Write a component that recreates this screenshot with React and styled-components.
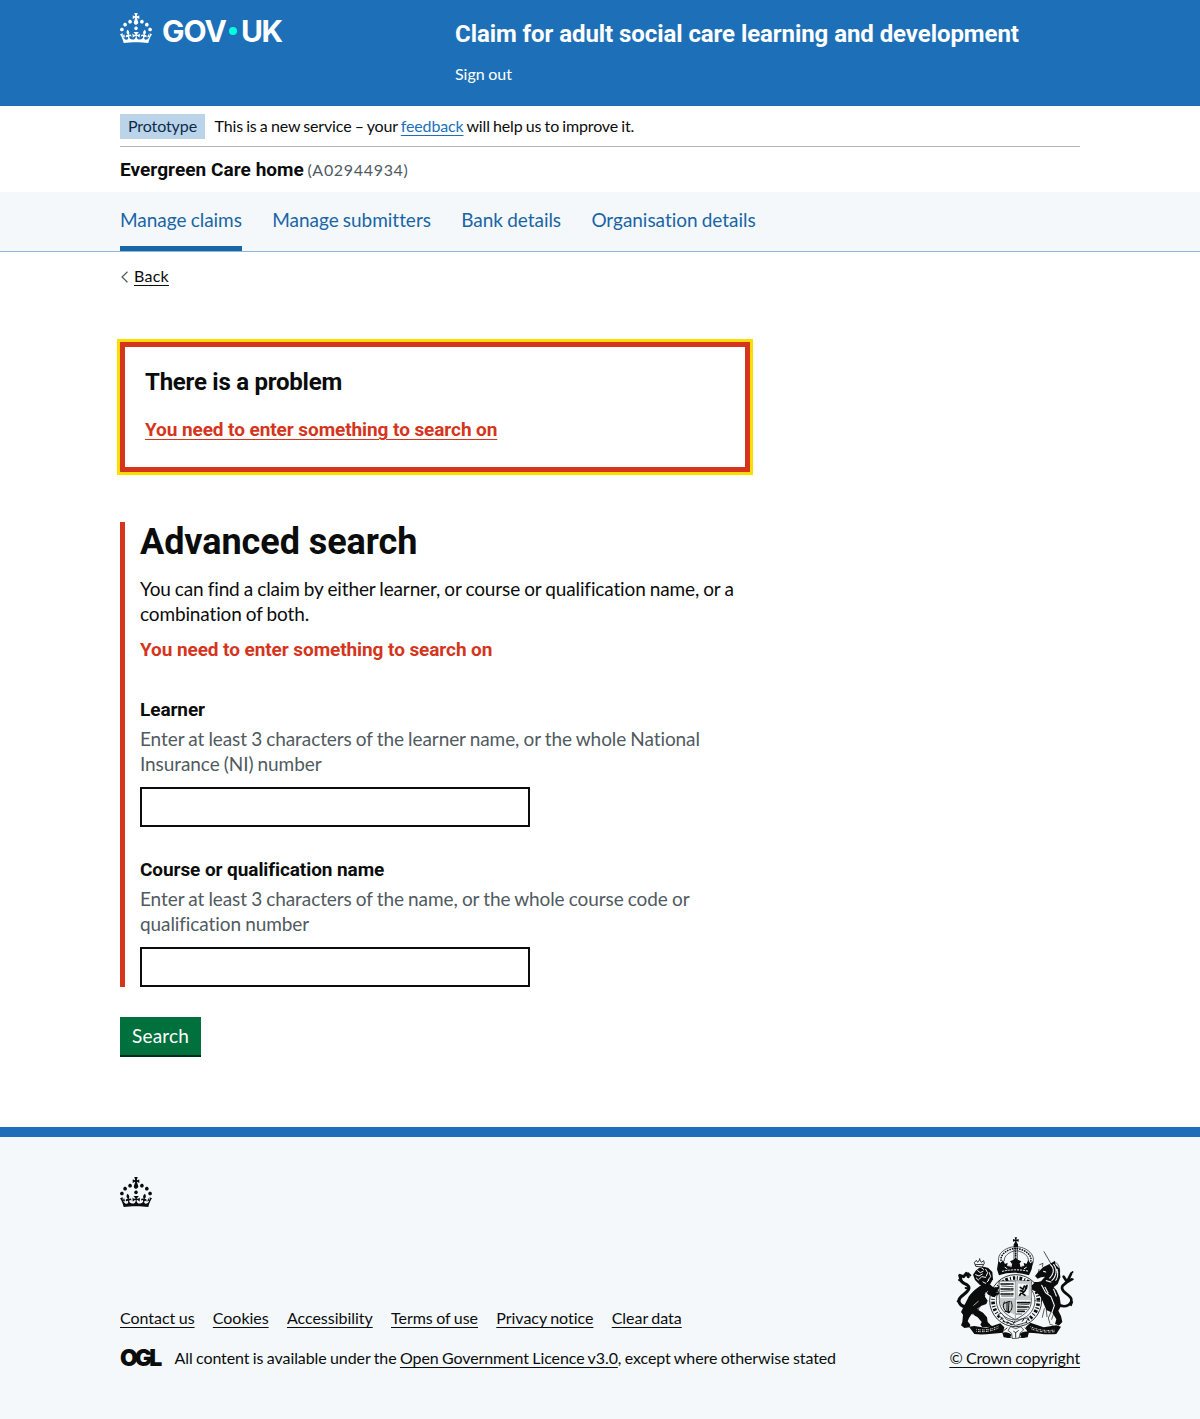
import React from "react";
import styled, { createGlobalStyle, css } from "styled-components";

const color = {
  text: "#0b0c0c",
  secondary: "#505a5f",
  brand: "#1d70b8",
  nav: "#1a65a6",
  panel: "#f4f8fb",
  error: "#d4351c",
  focus: "#ffdd00",
};

const regular = css`
  font-family: Lato, "Open Sans", sans-serif;
  font-weight: 400;
`;
const bold = css`
  font-family: Roboto, Arial, sans-serif;
  font-weight: 700;
  word-spacing: 0;
`;

const GlobalStyle = createGlobalStyle`
  * { box-sizing: border-box; }
  body {
    margin: 0;
    background: ${color.panel};
    color: ${color.text};
    ${regular}
    font-size: 19px;
    line-height: 25px;
    word-spacing: -0.6px;
    letter-spacing: -0.12px;
    font-variant-ligatures: none;
    -webkit-font-smoothing: antialiased;
  }
`;

const Page = styled.div`
  background: #fff;
`;

const Container = styled.div`
  width: 960px;
  margin: 0 auto;
`;

const Link = styled.a`
  color: ${(p) => p.$color || color.text};
  text-decoration: underline;
  text-decoration-thickness: 1px;
  text-underline-offset: 3px;
`;

/* Header */
const Header = styled.header`
  height: 106px;
  background: ${color.brand};
  color: #fff;
`;
const HeaderRow = styled(Container)`
  display: flex;
  padding-top: 13px;
`;
const LogoColumn = styled.div`
  display: flex;
  align-items: flex-start;
  width: 335px;
  height: 36px;
`;
const Wordmark = styled.div`
  display: flex;
  align-items: center;
  margin-left: 10px;
  height: 36px;
  font-family: Inter, Arial, sans-serif;
  font-weight: 650;
  font-size: 30px;
  line-height: 36px;
`;
const WordGov = styled.span`
  width: 67px;
  letter-spacing: -1px;
`;
const WordUk = styled.span`
  letter-spacing: -1.5px;
`;
const Dot = styled.span`
  width: 8px;
  height: 8px;
  margin: 0 4px 0 0;
  border-radius: 50%;
  background: #00ffe0;
`;
const ServiceColumn = styled.div`
  padding-top: 6px;
`;
const ServiceName = styled.div`
  ${bold}
  font-size: 24px;
  line-height: 30px;
  letter-spacing: -0.07px;
`;
const SignOut = styled.a`
  display: block;
  margin-top: 15px;
  font-size: 16px;
  line-height: 20px;
  letter-spacing: 0;
`;

/* Phase banner */
const PhaseBanner = styled(Container)`
  display: flex;
  align-items: flex-start;
  gap: 9.5px;
  height: 41px;
  padding-top: 8px;
  border-bottom: 1px solid #b1b4b6;
  font-size: 16px;
  line-height: 23px;
`;
const Tag = styled.strong`
  width: 85px;
  height: 25px;
  background: #bbd4ea;
  color: #0c2d4a;
  font-weight: 400;
  text-align: center;
  letter-spacing: -0.1px;
`;
const PhaseText = styled.span`
  letter-spacing: -0.15px;
  word-spacing: -0.7px;
`;

const Organisation = styled(Container)`
  height: 45px;
  padding-top: 9px;
`;
const OrganisationName = styled.span`
  ${bold}
  letter-spacing: 0.05px;
`;
const OrganisationCode = styled.span`
  margin-left: 3.5px;
  font-size: 16px;
  letter-spacing: 0.68px;
  color: ${color.secondary};
`;

/* Navigation */
const NavBar = styled.nav`
  background: ${color.panel};
  border-bottom: 1px solid #8eb8dc;
`;
const NavList = styled(Container)`
  display: flex;
  gap: 30.3px;
  height: 59px;
`;
const NavItem = styled.a`
  padding-top: 15px;
  color: ${color.nav};
  letter-spacing: -0.03px;
  white-space: nowrap;
  border-bottom: 5px solid ${(p) => (p.$active ? color.nav : "transparent")};
`;

/* Main */
const BackLink = styled.div`
  display: flex;
  align-items: center;
  gap: 5px;
  height: 20px;
  margin-top: 15px;
  font-size: 16px;
  line-height: 20px;
`;
const BackText = styled(Link)`
  height: 22px;
  letter-spacing: 0.25px;
`;
const Main = styled.main`
  width: 630px;
  padding: 55px 0 72px;
`;
const ErrorSummary = styled.section`
  height: 130px;
  padding: 20px;
  border: 5px solid ${color.error};
  outline: 3px solid ${color.focus};
`;
const ErrorTitle = styled.h2`
  ${bold}
  margin: 0 0 19px;
  font-size: 24px;
  line-height: 30px;
  letter-spacing: -0.24px;
`;
const ErrorLink = styled(Link)`
  ${bold}
  letter-spacing: -0.08px;
`;
const FormGroup = styled.div`
  height: 465px;
  margin: 50px 0 30px;
  padding-left: 15px;
  border-left: 5px solid ${color.error};
`;
const Heading = styled.h1`
  ${bold}
  margin: 0 0 14px;
  font-size: 36px;
  line-height: 40px;
  letter-spacing: -0.06px;
`;
const Paragraph = styled.p`
  margin: 0;
  letter-spacing: -0.135px;
`;
const ErrorMessage = styled.p`
  ${bold}
  margin: 11px 0 35px;
  color: ${color.error};
  letter-spacing: -0.08px;
`;
const Field = styled.div`
  display: flex;
  flex-direction: column;
  margin-bottom: 30px;
`;
const Label = styled.label`
  ${bold}
  letter-spacing: -0.08px;
`;
const Hint = styled.div`
  margin: 4px 0 11px;
  color: ${color.secondary};
  letter-spacing: -0.085px;
`;
const Input = styled.input`
  width: 390px;
  height: 40px;
  padding: 5px;
  border: 2px solid ${color.text};
  border-radius: 0;
  background: #fff;
`;
const Button = styled.button`
  display: block;
  width: 81px;
  height: 38px;
  padding: 0 0 2px;
  border: 0;
  background: #00703c;
  box-shadow: 0 2px 0 #002d18;
  color: #fff;
  ${regular}
  font-size: 19px;
  line-height: 25px;
  letter-spacing: 0.15px;
`;

/* Footer */
const Footer = styled.footer`
  height: 292px;
  padding-top: 40px;
  border-top: 10px solid ${color.brand};
  background: ${color.panel};
  font-size: 16px;
  line-height: 18px;
`;
const FooterRow = styled(Container)`
  display: flex;
  justify-content: space-between;
  align-items: flex-end;
  margin-top: 30px;
`;
const FooterLinks = styled.div`
  display: flex;
  gap: 18.3px;
  height: 20px;
  margin-bottom: 20px;
  letter-spacing: -0.03px;
`;
const Licence = styled.div`
  display: flex;
  align-items: flex-start;
  height: 20px;
`;
const LicenceText = styled.span`
  letter-spacing: -0.09px;
`;
const LicenceLogo = styled.span`
  width: 54.5px;
  height: 20px;
  font-family: Inter, Arial, sans-serif;
  font-weight: 900;
  font-size: 23px;
  line-height: 18px;
  letter-spacing: -3px;
`;
const Copyright = styled.div`
  display: flex;
  flex-direction: column;
  align-items: center;
  gap: 10px;
`;
const CopyrightLink = styled(Link)`
  height: 20px;
  letter-spacing: -0.14px;
`;

function Crown() {
  return (
    <svg width="32" height="30" viewBox="0 0 32 30" fill="currentColor" display="block">
      <path d="M22.6 10.4c-1 .4-2-.1-2.4-1-.4-.9.1-2 1-2.4.9-.4 2 .1 2.4 1s-.1 2-1 2.4m-5.9 6.7c-.9.4-2-.1-2.4-1-.4-.9.1-2 1-2.4.9-.4 2 .1 2.4 1s-.1 2-1 2.4m10.8-3.7c-1 .4-2-.1-2.4-1-.4-.9.1-2 1-2.4.9-.4 2 .1 2.4 1s0 2-1 2.4m3.3 4.8c-1 .4-2-.1-2.4-1-.4-.9.1-2 1-2.4.9-.4 2 .1 2.4 1s-.1 2-1 2.4M17 4.7l2.3 1.2V2.5l-2.3.7-.2-.2.9-3h-3.4l.9 3-.2.2c-.1.1-2.3-.7-2.3-.7v3.4L15 4.7c.1.1.1.2.2.2l-1.3 4c-.1.2-.1.4-.1.6 0 1.1.8 2 1.9 2.2h.7c1-.2 1.9-1.1 1.9-2.1 0-.2 0-.4-.1-.6l-1.3-4c-.1-.2 0-.2.1-.3m-7.6 5.7c.9.4 2-.1 2.4-1 .4-.9-.1-2-1-2.4-.9-.4-2 .1-2.4 1s0 2 1 2.4m-5 3c.9.4 2-.1 2.4-1 .4-.9-.1-2-1-2.4-.9-.4-2 .1-2.4 1s.1 2 1 2.4m-3.2 4.8c.9.4 2-.1 2.4-1 .4-.9-.1-2-1-2.4-.9-.4-2 .1-2.4 1s0 2 1 2.4m14.8 11c4.4 0 8.6.3 12.3.8 1.1-4.5 2.4-7 3.7-8.8l-2.5-.9c.2 1.3.3 1.9 0 2.7-.4-.4-.8-1.1-1.1-2.3l-1.2 4c.7-.5 1.3-.8 2-.9-1.1 2.5-2.6 3.1-3.5 3-1.1-.2-1.7-1.2-1.5-2.1.3-1.2 1.5-1.5 2.1-.1 1.1-2.3-.8-3-2-2.3 1.9-1.9 2.1-3.5.6-5.6-2.1 1.6-2.1 3.2-1.2 5.5-1.2-1.4-3.2-.6-2.5 1.6.9-1.4 2.1-.5 1.9.8-.2 1.1-1.7 2.1-3.5 1.9-2.7-.2-2.9-2.1-2.9-3.6.7-.1 1.9.5 2.9 1.9l.4-4.3c-1.1 1.1-2.1 1.4-3.2 1.4.4-1.2 2.1-3 2.1-3h-5.4s1.7 1.9 2.1 3c-1.1 0-2.1-.2-3.2-1.4l.4 4.3c1-1.4 2.2-2 2.9-1.9-.1 1.5-.2 3.4-2.9 3.6-1.9.2-3.4-.8-3.5-1.9-.2-1.3 1-2.2 1.9-.8.7-2.3-1.2-3-2.5-1.6.9-2.2.9-3.9-1.2-5.5-1.5 2-1.3 3.7.6 5.6-1.2-.7-3.1 0-2 2.3.6-1.4 1.8-1.1 2.1.1.2.9-.3 1.9-1.5 2.1-.9.2-2.4-.5-3.5-3 .6 0 1.2.3 2 .9l-1.2-4c-.3 1.1-.7 1.9-1.1 2.3-.3-.8-.2-1.4 0-2.7l-2.9.9C1.3 23 2.6 25.5 3.7 30c3.7-.5 7.9-.8 12.3-.8" />
    </svg>
  );
}

function RoyalArms() {
  const ink = color.text;
  const paper = color.panel;
  return (
    <svg width="125" height="102" viewBox="21 21 375 306" fill="none" stroke={ink} strokeLinejoin="round" strokeLinecap="round" display="block">
      {/* garter */}
      <circle cx="212" cy="212" r="78" fill={paper} strokeWidth="2.5" />
      <circle cx="212" cy="212" r="68" strokeWidth="11" strokeDasharray="3 6 7 5 3 5 8 6" strokeLinecap="butt" />
      <circle cx="212" cy="212" r="58" strokeWidth="2" />
      {/* lion */}
      <g>
        <path fill={ink} stroke="none" d="M128 160c10 2 14 14 26 16l6 8-8 6 4 6-12 4-14-6-8-8-2 14 8 12-4 10-16 6-8 12 14 8 12 14 2 14 8 8-6 8h-18l-6-8 4-8-12-14-18-10-8 12-4 10 8 10-2 8-16 2-10-8 4-10 2-22-6-8 12-24 8-16c6-16 28-32 53-50z" />
        <path fill={ink} stroke="none" d="M92 122l-8 12 6 16 14 14 18 4 14-6 8-14-2-22-12-12-14-4-14 4z" />
        <path stroke={paper} strokeWidth="3" d="M98 122l8 6 8-4M92 134l10 4 10-6M102 148l8-8 12 2M122 118l6 10-4 10M133 128l4 12-8 10M114 156l8 4M94 144l6 6M126 156l6-6M110 114l6 4" />
        <path stroke={paper} strokeWidth="2" d="M86 226l14-12M98 236l16-8M128 184l-8 10M84 252l6 10" />
        <path stroke={ink} strokeWidth="2.5" d="M92 108l-4-10 6-7 4 6 6-8 5 8 7-5 2 8-6 10zM104 89v-3M92 104l22-1" />
        <path strokeWidth="9" d="M70 228c-20 6-29-8-28-18 2-14 28-20 30-36 0-14-22-10-24-24M48 150l-4-14 12 4 8-10 6 10" />
        <path strokeWidth="6" d="M56 158l-14-8M72 176l-10-2M44 208l-6 6M70 130l6 6" />
        <path strokeWidth="6" d="M66 286l-6 2M132 286l10 6M144 194l18-4M144 176l16-2" />
      </g>
      {/* unicorn */}
      <g>
        <path strokeWidth="2" strokeDasharray="3 1.5" d="M297 65l22 38" />
        <path fill={ink} stroke="none" d="M318 100l12-8 2 12 12 12 2 26-8 20-18 14-24 2-22-10-4-10 18-4 12-14-12 2-10 4-8-8 8-10 16-16z" />
        <path stroke={paper} strokeWidth="3.5" d="M326 104c12 14 8 36-6 48M316 104c14 12 10 28-2 40M296 124l6 2M304 152l14 4M336 118c4 14 2 26-4 34" strokeDasharray="4 2" />
        <path strokeWidth="2" d="M334 98c14 12 14 40-2 58M282 118l-3 14M284 104l10-4-2 10" />
        <path fill={ink} stroke="none" d="M268 156l24 0 28 10 14 14 10 22 4 26-8 14 8 16 4 18-10 10-12-4 4-14-12-20-18-8-6-14-10-24-14-16-14-8z" />
        <path stroke={paper} strokeWidth="3.5" strokeDasharray="5 2" d="M290 166l12 22 16 12 10 26-8 24-6 20 8 14M326 178l8 20M300 172l10 18" />
        <path strokeWidth="2" d="M318 246l-8 18 4 14M326 250l-6 18M314 282l10 4M304 240l2 20M298 236l-6 26" />
        <path strokeWidth="8" d="M344 226c20 8 37-4 35-18-2-14-26-18-28-34-1-12 14-10 18-22M368 152l10-20M360 160l20-12M356 140l8 12" />
        <path strokeWidth="5" d="M378 130l5-4M380 148l4 0M382 216l-4 10M270 168l-8 8M340 284l6-6" />
      </g>
      {/* shield */}
      <path fill={paper} strokeWidth="2" d="M163 153h96v58c0 28-18 42-48 58-30-16-48-30-48-58z" />
      <path fill="#c4c8ca" stroke="none" d="M211 153h48v8h-48zM211 196h48v8h-48zM211 153h8v50h-8zM251 153h8v50h-8zM164 210h46v44c-28-12-46-22-46-44z" />
      <path strokeWidth="5" strokeDasharray="7 3 10 2 5 4" d="M168 162h36M168 177h36M168 192h36M218 218h36M218 231h32M218 244h22" />
      <path strokeWidth="2" strokeDasharray="4 2" d="M170 168l34 2M168 184l36-2M170 198h34M218 225l34-2M218 238h28M214 252h18" />
      <path strokeWidth="5" d="M226 172l8 6 4-10 6 4-4 10-8 8 8 6M228 190l-4 6M246 166l-2 10M226 182l8 2" />
      <path strokeWidth="3" d="M178 216c-8 14 0 30 14 32M186 216v28M192 216l-2 30M198 214c6 12 4 26-6 34M178 220l16-6M180 244l14 2" />
      <path stroke="#9ca0a2" strokeWidth="3" d="M211 154v112M164 207h94" />
      <path fill={paper} strokeWidth="2" d="M160 254l20 22 32 10 30-8 8-14-16 2-26 12-24-10-14-18z" />
      <path strokeWidth="3" d="M170 262l4 4M186 276l6 2M206 280l2-5M232 274l4-6" />
      {/* crown */}
      <path fill={paper} strokeWidth="2" d="M166 108c-20-34 16-58 46-58s68 24 48 58z" />
      <path strokeWidth="5" strokeDasharray="0.5 7" d="M170 98c-10-24 18-41 42-43 24 2 54 19 44 43" />
      <path strokeWidth="2" d="M178 92c-2-14 14-26 32-30M250 92c2-14-14-26-34-30" />
      <path strokeWidth="5" strokeDasharray="1 6" d="M212 56v32" />
      <path strokeWidth="2" d="M207 54v34M217 54v34" />
      <path fill={ink} stroke="none" d="M160 94l8 6 6-10 6 12 8-4-2 10 10 4 4-12-5-6 9-4 8-6 8 6 9 4-5 6 4 12 10-4-2-10 8 4 6-12 6 10 8-6-4 24-8 18c-28-10-62-10-90 0l-6-18z" />
      <path stroke={paper} strokeWidth="3" strokeDasharray="4 5" d="M172 124c24-6 56-6 80 0" />
      <path stroke={paper} strokeWidth="3" d="M180 112l6 4M200 102l-2 8M226 102l2 8M244 112l-6 4" />
      <path fill={ink} stroke="none" d="M209 22h7l-2 7 7-2v8l-7-2 2 6 3 4v9h-13v-9l3-4 2-6-7 2v-8l7 2z" />
      {/* ribbon and compartment */}
      <path fill={ink} stroke="none" d="M72 290l16-2 36 6 42-14 12 12-4 16c-28 2-58 8-86 4z" />
      <path fill={ink} stroke="none" d="M348 290l-14-4-38 6-40-14-14 14 6 16c28 0 56 8 86 4z" />
      <path stroke={paper} strokeWidth="2.6" strokeDasharray="2 3 5 2" d="M94 298c20 4 44 2 66-10M94 304c22 3 46 0 66-10M256 290c20 9 44 14 74 10M258 296c20 9 42 12 72 9" strokeLinecap="butt" />
      <path fill={ink} stroke="none" d="M172 308c10-4 22 0 28 6l-6 10-18-2zM252 306c-10-4-22 0-28 6l6 12 18-2z" />
      <path fill={paper} strokeWidth="2" d="M198 290l14 6 16-6 8 10-10 8-4 16-20 2-2-16-10-8z" />
      <path strokeWidth="2.5" d="M176 302l10-8M240 294l10 8M206 304l6 4 8-6M212 308v14M186 322h12M224 322h14" />
    </svg>
  );
}

const navItems = [
  { label: "Manage claims", active: true },
  { label: "Manage submitters" },
  { label: "Bank details" },
  { label: "Organisation details" },
];

const footerItems = [
  "Contact us",
  "Cookies",
  "Accessibility",
  "Terms of use",
  "Privacy notice",
  "Clear data",
];

const fields = [
  {
    id: "learner",
    label: "Learner",
    hint: "Enter at least 3 characters of the learner name, or the whole National Insurance (NI) number",
  },
  {
    id: "course",
    label: "Course or qualification name",
    hint: "Enter at least 3 characters of the name, or the whole course code or qualification number",
  },
];

export default function App() {
  return (
    <Page>
      <GlobalStyle />
      <Header>
        <HeaderRow>
          <LogoColumn>
            <Crown />
            <Wordmark>
              <WordGov>GOV</WordGov>
              <Dot />
              <WordUk>UK</WordUk>
            </Wordmark>
          </LogoColumn>
          <ServiceColumn>
            <ServiceName>Claim for adult social care learning and development</ServiceName>
            <SignOut>Sign out</SignOut>
          </ServiceColumn>
        </HeaderRow>
      </Header>

      <PhaseBanner>
        <Tag>Prototype</Tag>
        <PhaseText>
          This is a new service – your <Link $color={color.brand}>feedback</Link> will help us to improve it.
        </PhaseText>
      </PhaseBanner>
      <Organisation>
        <OrganisationName>Evergreen Care home</OrganisationName>
        <OrganisationCode>(A02944934)</OrganisationCode>
      </Organisation>

      <NavBar>
        <NavList>
          {navItems.map((item) => (
            <NavItem key={item.label} $active={item.active}>
              {item.label}
            </NavItem>
          ))}
        </NavList>
      </NavBar>

      <Container>
        <BackLink>
          <svg width="9" height="12" viewBox="0 0 9 12" fill="none" stroke={color.secondary} strokeWidth="1.2">
            <path d="M7.5 .8L2 6l5.5 5.2" />
          </svg>
          <BackText>Back</BackText>
        </BackLink>
        <Main>
          <ErrorSummary>
            <ErrorTitle>There is a problem</ErrorTitle>
            <ErrorLink $color={color.error}>You need to enter something to search on</ErrorLink>
          </ErrorSummary>
          <FormGroup>
            <Heading>Advanced search</Heading>
            <Paragraph>
              You can find a claim by either learner, or course or qualification name, or a combination of both.
            </Paragraph>
            <ErrorMessage>You need to enter something to search on</ErrorMessage>
            {fields.map((field) => (
              <Field key={field.id}>
                <Label htmlFor={field.id}>{field.label}</Label>
                <Hint>{field.hint}</Hint>
                <Input id={field.id} type="text" />
              </Field>
            ))}
          </FormGroup>
          <Button>Search</Button>
        </Main>
      </Container>

      <Footer>
        <Container>
          <Crown />
        </Container>
        <FooterRow>
          <div>
            <FooterLinks>
              {footerItems.map((item) => (
                <Link key={item}>{item}</Link>
              ))}
            </FooterLinks>
            <Licence>
              <LicenceLogo>OGL</LicenceLogo>
              <LicenceText>
                All content is available under the <Link>Open Government Licence v3.0</Link>, except where otherwise stated
              </LicenceText>
            </Licence>
          </div>
          <Copyright>
            <RoyalArms />
            <CopyrightLink>© Crown copyright</CopyrightLink>
          </Copyright>
        </FooterRow>
      </Footer>
    </Page>
  );
}
